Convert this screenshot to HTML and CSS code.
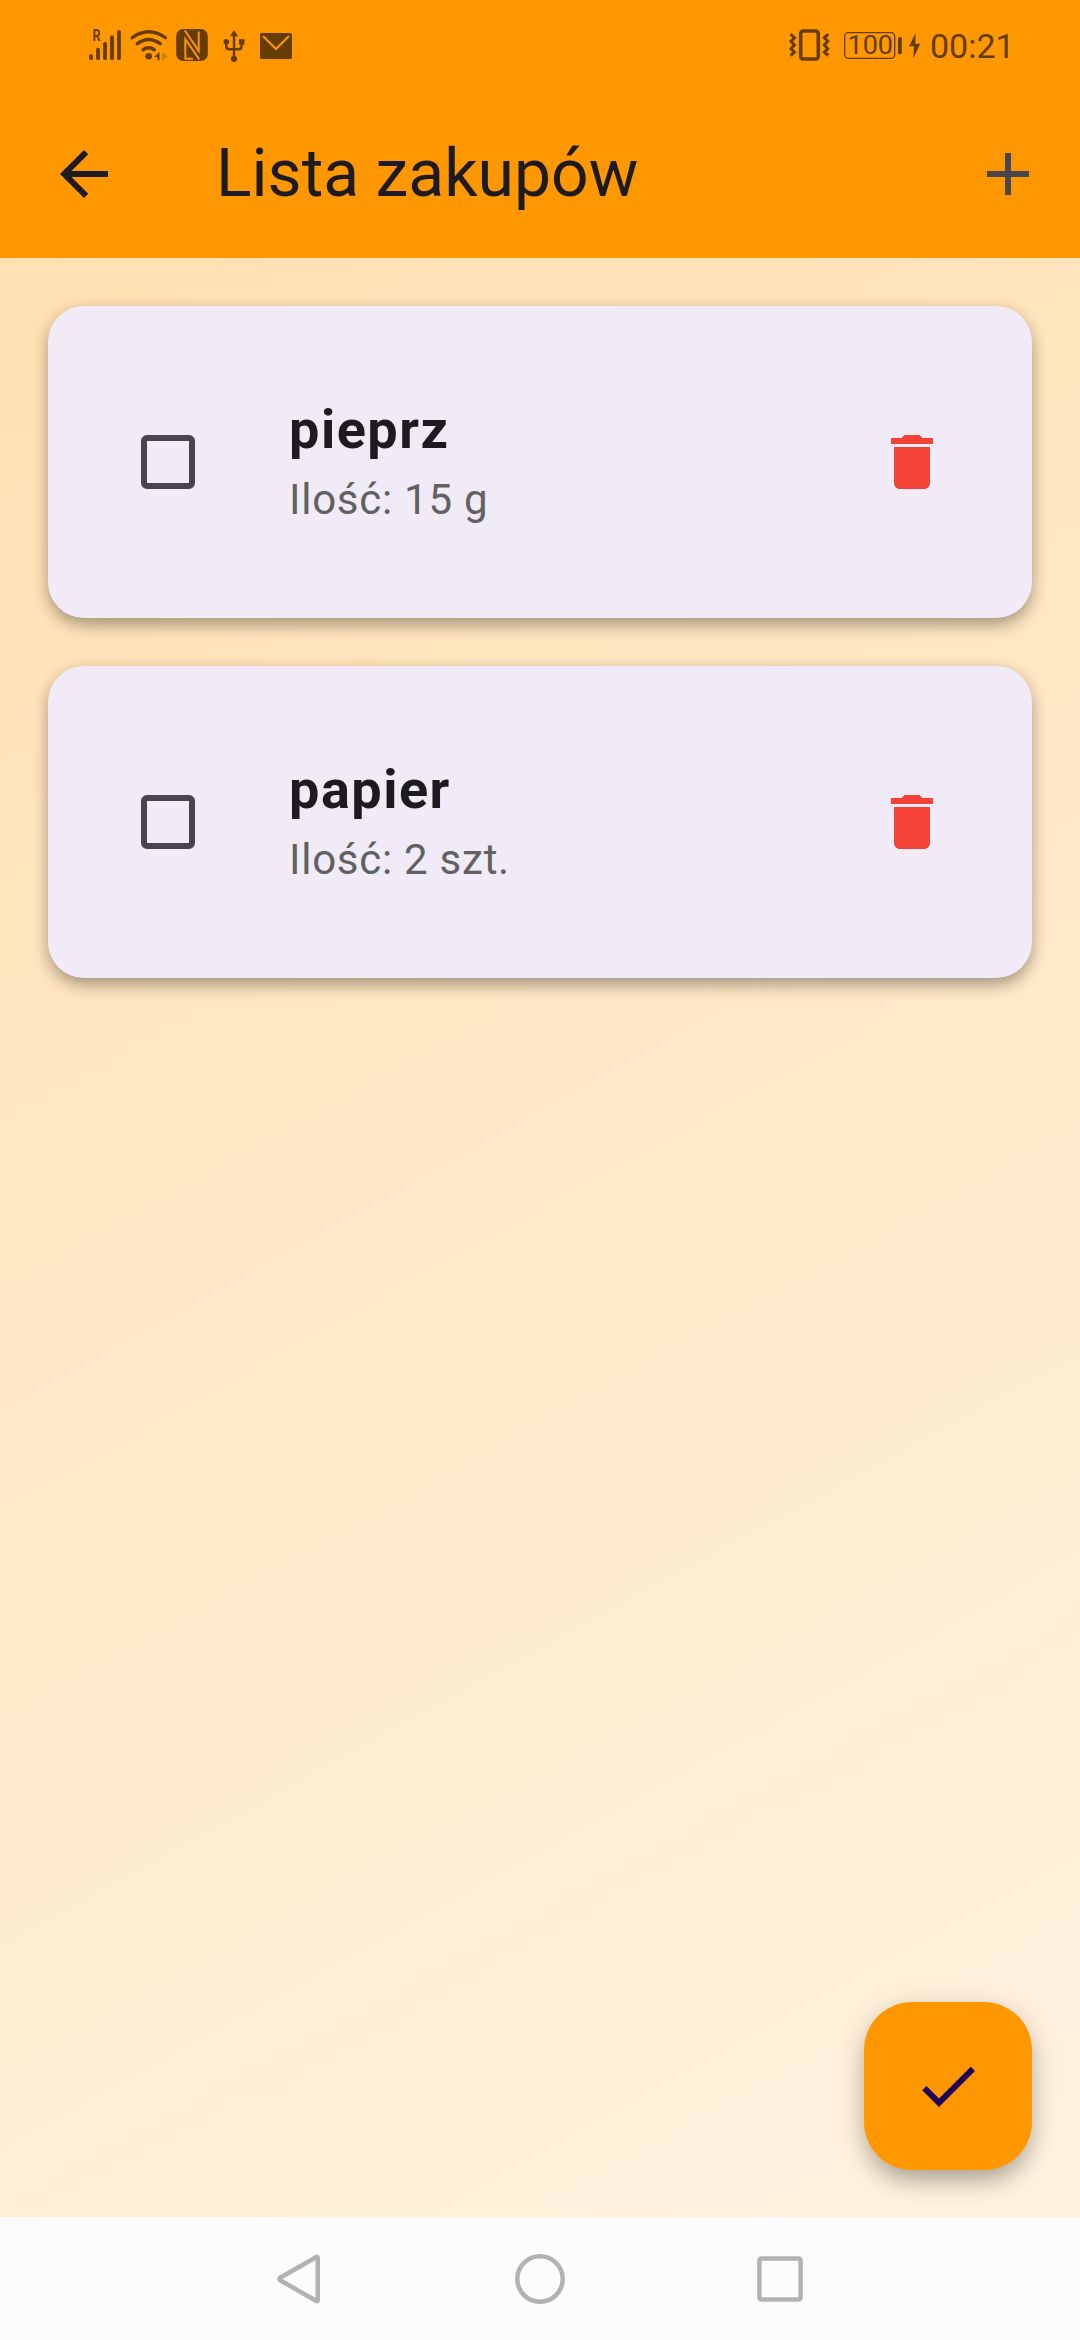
FILE: index.html
```html
<!DOCTYPE html>
<html lang="pl">
<head>
<meta charset="utf-8">
<title>Lista zakupów</title>
<link rel="stylesheet" href="styles.css">
</head>
<body>
<div class="screen">
  <header class="top">
    <div class="status">
      <div class="status-icons">
        <svg class="ink" width="38" height="90" viewBox="87 0 38 90">
          <text class="roaming" x="92.5" y="40.5" textLength="8" lengthAdjust="spacingAndGlyphs">R</text>
          <path class="bars" d="M91 56v2.2M98 49.6v8.6M105 43.8v14.4M112 37.2v21M119 31.8v26.4"/>
        </svg>
        <svg class="ink" width="48" height="90" viewBox="125 0 48 90">
          <path class="wave" d="M132.200 37.700Q148.700 26 165.200 37.700M137.300 43.700Q148.700 35.300 160.100 43.700M143 49.800Q148.700 45.600 154.400 49.800"/>
          <circle cx="148.700" cy="56.300" r="3.300"/>
          <path d="M159.500 52v8.300h-2v-3.300h-3.500z"/>
          <path class="faint" d="M162.200 52l5.300 4.500-5.300 4.300z"/>
        </svg>
        <svg class="ink" width="42" height="90" viewBox="173 0 42 90">
          <rect x="176.200" y="29" width="31.600" height="32" rx="7"/>
          <path class="slot" d="M184.800 30.500L198.700 51V31.500M199.300 59.500L185.300 39V58.800H193"/>
        </svg>
        <svg class="ink" width="36" height="90" viewBox="215 0 36 90">
          <path class="wire" d="M234 35v24M226.200 43v3.200q0 3 3.200 3h9.200q3 0 3-3V43"/>
          <path d="M234 30l4 6.300h-8z"/>
          <circle cx="226.300" cy="41.800" r="2.800"/>
          <rect x="239" y="39.200" width="5.500" height="5.400"/>
          <circle cx="234" cy="58.800" r="3.100"/>
        </svg>
        <svg class="ink" width="46" height="90" viewBox="251 0 46 90">
          <rect x="260" y="33" width="32" height="26" rx="1.500"/>
          <path class="fold" d="M263 36l13 13 13-13"/>
        </svg>
      </div>
      <div class="status-icons">
        <svg class="ink" width="52" height="90" viewBox="785 0 52 90">
          <rect class="phone" x="800.700" y="31" width="17.600" height="28" rx="2.500"/>
          <path class="buzz" d="M790.500 34l4 3.800-3.500 3.500 3.500 3.700-3.500 3.700 3.500 3.500-4 3.300M828.300 34l-4 3.800 3.500 3.500-3.500 3.700 3.500 3.700-3.500 3.500 4 3.300"/>
        </svg>
        <svg class="ink" width="88" height="90" viewBox="837 0 88 90">
          <rect class="cell" x="844.700" y="32.700" width="50" height="25.600" rx="3.500"/>
          <text class="charge" x="847.500" y="54" textLength="45.500" lengthAdjust="spacingAndGlyphs">100</text>
          <rect x="898" y="37" width="3.800" height="17.300" rx="1.500"/>
          <path d="M915.700 32.700L909 46.200h5l-.8 12.300 7-14.800h-5z"/>
        </svg>
        <span class="clock">00:21</span>
      </div>
    </div>
    <div class="appbar">
      <svg class="icon back" viewBox="0 0 24 24"><path d="M20 11H7.830l5.590-5.590L12 4l-8 8 8 8 1.410-1.410L7.830 13H20v-2z"/></svg>
      <h1 class="title">Lista zakupów</h1>
      <svg class="icon add" viewBox="0 0 24 24"><path d="M19 13h-6v6h-2v-6H5v-2h6V5h2v6h6v2z"/></svg>
    </div>
  </header>
  <main class="content">
    <article class="card">
      <span class="checkbox"></span>
      <div class="item">
        <h2 class="name">pieprz</h2>
        <p class="amount">Ilość: 15 g</p>
      </div>
      <svg class="icon delete" viewBox="0 0 24 24"><path d="M6 19c0 1.100.9 2 2 2h8c1.100 0 2-.9 2-2V7H6v12zM19 4h-3.500l-1-1h-5l-1 1H5v2h14V4z"/></svg>
    </article>
    <article class="card">
      <span class="checkbox"></span>
      <div class="item">
        <h2 class="name">papier</h2>
        <p class="amount">Ilość: 2 szt.</p>
      </div>
      <svg class="icon delete" viewBox="0 0 24 24"><path d="M6 19c0 1.100.9 2 2 2h8c1.100 0 2-.9 2-2V7H6v12zM19 4h-3.500l-1-1h-5l-1 1H5v2h14V4z"/></svg>
    </article>
    <div class="fab">
      <svg class="icon" viewBox="0 0 24 24"><path d="M9 16.170L4.830 12l-1.420 1.410L9 19 21 7l-1.410-1.410z"/></svg>
    </div>
  </main>
  <nav class="navbar">
    <svg viewBox="0 0 60 60"><path d="M47.800 9.200v41.600q0 2-1.800 1L10.600 31.500q-2.400-1.500 0-3L46 8.200q1.800-1 1.800 1z"/></svg>
    <svg viewBox="0 0 60 60"><circle cx="30" cy="30" r="22.700"/></svg>
    <svg viewBox="0 0 60 60"><rect x="9.400" y="9.400" width="41.200" height="41.200" rx="2"/></svg>
  </nav>
</div>
</body>
</html>
```
FILE: styles.css
```css
* { box-sizing: border-box; }
body { margin: 0; font-family: Roboto, sans-serif; }
h1, h2, p { margin: 0; font-weight: 400; }
svg { display: block; flex: none; }

.screen {
  width: 1080px;
  height: 2340px;
  display: flex;
  flex-direction: column;
  overflow: hidden;
}

/* Status bar and app bar */
.top { height: 258px; background: #ff9800; }
.status {
  height: 90px;
  padding: 0 66px 0 87px;
  display: flex;
  justify-content: space-between;
}
.status-icons { display: flex; }
.ink { fill: #663d00; }
.roaming { font: 700 16px Roboto, sans-serif; }
.bars, .wave, .wire, .phone, .buzz, .cell { fill: none; stroke: #663d00; }
.bars { stroke-width: 3.800; stroke-linecap: round; }
.wave { stroke-width: 3.400; stroke-linecap: round; }
.faint { opacity: .35; }
.slot { fill: none; stroke: #ff9800; stroke-width: 1.900; }
.wire { stroke-width: 2.400; }
.fold { fill: none; stroke: #ff9800; stroke-width: 2; }
.phone { stroke-width: 3.600; }
.buzz { stroke-width: 3; }
.cell { stroke-width: 1.300; }
.charge { font: 400 25.500px Roboto, sans-serif; }
.clock {
  width: 89px;
  padding-left: 5px;
  font-size: 34px;
  line-height: 92px;
  color: #663d00;
  white-space: nowrap;
}

.appbar {
  height: 168px;
  padding: 0 36px 0 48px;
  display: flex;
  align-items: center;
}
.icon { width: 72px; height: 72px; fill: currentColor; }
.back { color: #1d1b20; }
.add { color: #49454f; }
.title {
  flex: 1;
  margin-left: 96px;
  font-size: 66px;
  line-height: 84px;
  color: #1d1b20;
}

/* Shopping list */
.content {
  position: relative;
  height: 1959px;
  padding: 48px;
  display: flex;
  flex-direction: column;
  gap: 48px;
  background: linear-gradient(151.130deg, #ffe0b2, #fff3e0);
}
.card {
  height: 312px;
  padding: 0 84px 0 93px;
  display: flex;
  align-items: center;
  border-radius: 36px;
  background: #f0ebf6;
  box-shadow: 0 9px 18px -2px rgba(0, 0, 0, .28), 0 3px 15px rgba(0, 0, 0, .14);
}
.checkbox {
  width: 54px;
  height: 54px;
  border: 6px solid #49454f;
  border-radius: 6px;
}
.item {
  flex: 1;
  margin-left: 94px;
  display: flex;
  flex-direction: column;
  gap: 4px;
}
.name {
  font-size: 54px;
  font-weight: 700;
  line-height: 72px;
  letter-spacing: 1.500px;
  color: #1d1b20;
}
.amount {
  font-size: 42px;
  line-height: 60px;
  letter-spacing: .750px;
  color: #616161;
}
.delete { color: #f44336; }

.fab {
  position: absolute;
  right: 48px;
  bottom: 47px;
  width: 168px;
  height: 168px;
  display: grid;
  place-items: center;
  border-radius: 48px;
  background: #ff9800;
  color: #21005d;
  box-shadow: 0 15px 24px -6px rgba(0, 0, 0, .25), 0 6px 30px rgba(0, 0, 0, .16);
}

/* System navigation */
.navbar {
  z-index: 1;
  flex: 1;
  padding: 0 270px 0 270px;
  display: flex;
  align-items: center;
  justify-content: space-between;
  background: #fcfcfc;
}
.navbar svg {
  width: 60px;
  height: 60px;
  fill: none;
  stroke: #b2b2b2;
  stroke-width: 4.500;
}
```
